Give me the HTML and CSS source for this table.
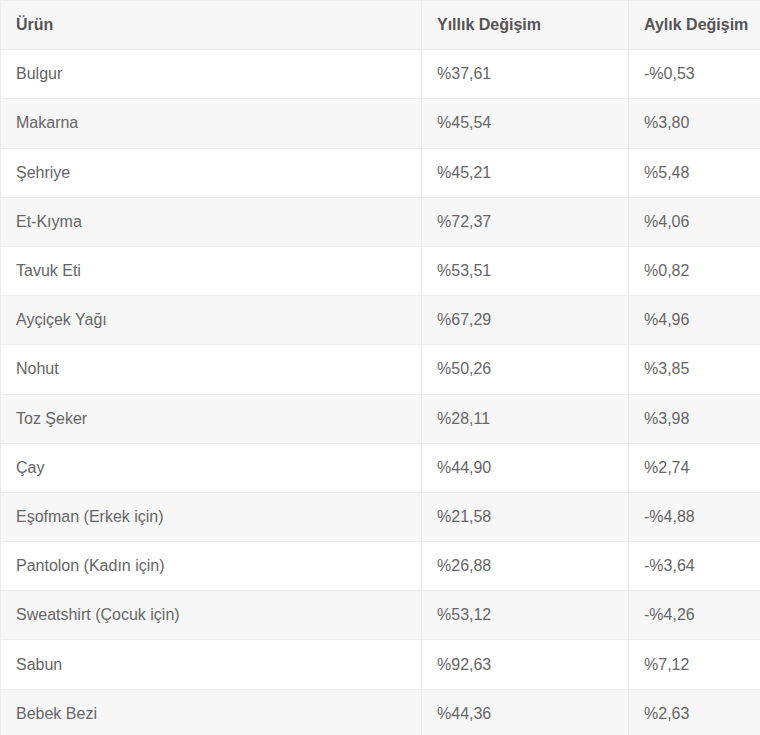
FILE: index.html
```html
<!DOCTYPE html>
<html lang="tr">
<head>
<meta charset="utf-8">
<title>Fiyat Değişimleri</title>
<link rel="stylesheet" href="styles.css">
</head>
<body>
<div class="wrap">
<table class="price-table">
<colgroup><col class="c1"><col class="c2"><col class="c3"></colgroup>
<thead>
<tr><th>Ürün</th><th>Yıllık Değişim</th><th>Aylık Değişim</th></tr>
</thead>
<tbody>
<tr><td>Bulgur</td><td>%37,61</td><td>-%0,53</td></tr>
<tr><td>Makarna</td><td>%45,54</td><td>%3,80</td></tr>
<tr><td>Şehriye</td><td>%45,21</td><td>%5,48</td></tr>
<tr><td>Et-Kıyma</td><td>%72,37</td><td>%4,06</td></tr>
<tr><td>Tavuk Eti</td><td>%53,51</td><td>%0,82</td></tr>
<tr><td>Ayçiçek Yağı</td><td>%67,29</td><td>%4,96</td></tr>
<tr><td>Nohut</td><td>%50,26</td><td>%3,85</td></tr>
<tr><td>Toz Şeker</td><td>%28,11</td><td>%3,98</td></tr>
<tr><td>Çay</td><td>%44,90</td><td>%2,74</td></tr>
<tr><td>Eşofman (Erkek için)</td><td>%21,58</td><td>-%4,88</td></tr>
<tr><td>Pantolon (Kadın için)</td><td>%26,88</td><td>-%3,64</td></tr>
<tr><td>Sweatshirt (Çocuk için)</td><td>%53,12</td><td>-%4,26</td></tr>
<tr><td>Sabun</td><td>%92,63</td><td>%7,12</td></tr>
<tr><td>Bebek Bezi</td><td>%44,36</td><td>%2,63</td></tr>
</tbody>
</table>
</div>
</body>
</html>
```
FILE: styles.css
```css
html, body {
  margin: 0;
  padding: 0;
  background: #ffffff;
}
.wrap {
  width: 760px;
  height: 735px;
  overflow: hidden;
}
.price-table {
  border-collapse: collapse;
  table-layout: fixed;
  width: 800px;
  font-family: "Liberation Sans", Arial, sans-serif;
  font-size: 16px;
  color: #666666;
}
.c1 { width: 421px; }
.c2 { width: 207px; }
.c3 { width: 172px; }
.price-table th,
.price-table td {
  border: 1px solid #ececec;
  padding: 0 15px;
  height: 48.2px;
  text-align: left;
  vertical-align: middle;
  white-space: nowrap;
}
.price-table th {
  font-weight: bold;
  color: #555555;
  background: #f7f7f7;
}
.price-table tbody tr:nth-child(even) td {
  background: #f7f7f7;
}
.price-table tbody tr:nth-child(odd) td {
  background: #ffffff;
}
```
